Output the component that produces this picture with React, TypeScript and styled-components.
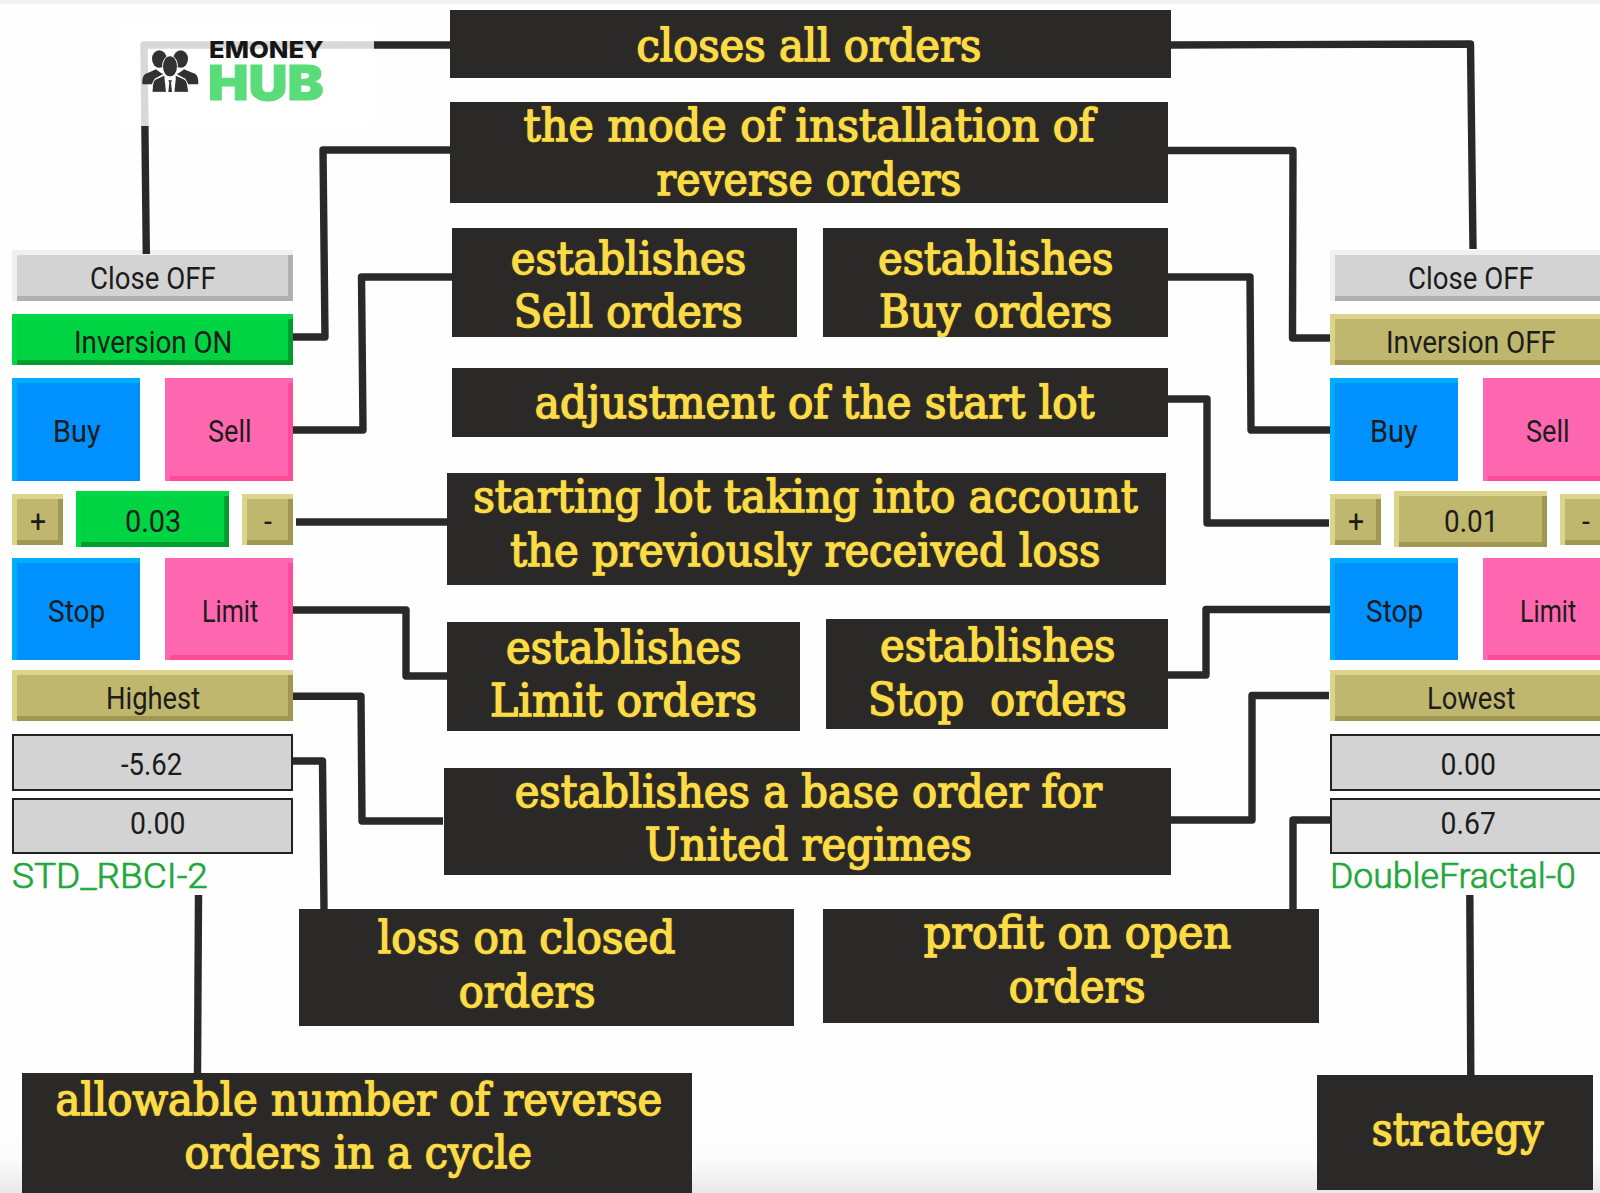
import { useLayoutEffect, useRef, useState } from "react";
import type { ReactNode } from "react";
import styled, { createGlobalStyle } from "styled-components";

const colors = {
  ink: "#2b2927",
  yellow: "#fbdc47",
  silver: "#d3d3d3",
  green: "#00d443",
  blue: "#0091ff",
  pink: "#ff68b0",
  khaki: "#c0b76e",
  label: "#1ea83c",
};

// [face, top/left edge, bottom/right edge]
const tones = {
  silver: [colors.silver, "#f0f0f0", "#b0b0b0"],
  green: [colors.green, "#00d846", "#009c2d"],
  blue: [colors.blue, "#00adff", "#0091ff"],
  pink: [colors.pink, "#ff68b0", "#ff4c98"],
  khaki: [colors.khaki, "#dcd48c", "#a09850"],
};

type Tone = keyof typeof tones;

const GlobalStyle = createGlobalStyle`
  body {
    margin: 0;
    background: #fefefe;
  }
  * {
    box-sizing: border-box;
  }
`;

const Board = styled.div`
  position: relative;
  width: 1600px;
  height: 1193px;
  overflow: hidden;
  border-top: 4px solid #f2f2f2;
  background: linear-gradient(#fefefe 1130px, #fafafa 1158px, #e8e8e8 1189px);
`;

const Panels = styled.div`
  display: flex;
  gap: 1036.5px;
  padding: 246.3px 0 0 12px;
`;

const Panel = styled.div`
  flex: none;
  width: 281.3px;
  font-family: Roboto, "Liberation Sans", sans-serif;
  font-size: 32px;
  color: #1c1c1c;
`;

const Row = styled.div<{ $h: number; $gap: number }>`
  display: flex;
  align-items: center;
  justify-content: space-between;
  height: ${(p) => p.$h}px;
  margin-bottom: ${(p) => p.$gap}px;
`;

const Key = styled.div<{ $tone: Tone; $w?: number; $h?: number }>`
  display: flex;
  align-items: center;
  justify-content: center;
  width: ${(p) => (p.$w ? `${p.$w}px` : "100%")};
  height: ${(p) => (p.$h ? `${p.$h}px` : "100%")};
  padding: 4px 0 0 1px;
  line-height: 32px;
  background: ${(p) => tones[p.$tone][0]};
  box-shadow: inset 5px 5px 0 ${(p) => tones[p.$tone][1]},
    inset -5px -5px 0 ${(p) => tones[p.$tone][2]};
`;

const Field = styled.div<{ $dx: number; $dy: number }>`
  display: flex;
  align-items: center;
  justify-content: center;
  width: 100%;
  height: 100%;
  border: 2.5px solid #222;
  background: ${colors.silver};
  line-height: 32px;
  > span {
    transform: translate(${(p) => p.$dx}px, ${(p) => p.$dy}px);
  }
`;

const Strategy = styled.div`
  padding-top: 2px;
  font-size: 35px;
  font-weight: 300;
  line-height: 42px;
  color: ${colors.label};
  -webkit-text-stroke: 0.7px ${colors.label};
`;

const FitBox = styled.span`
  display: block;
  flex: none;
  white-space: pre;
`;

const FitText = styled.span`
  display: inline-block;
  transform-origin: 0 50%;
`;

// Stretches or squeezes one line of text to a given width
const Fit = ({ w, children }: { w: number; children: ReactNode }) => {
  const ref = useRef<HTMLSpanElement>(null);
  const [scale, setScale] = useState(1);
  useLayoutEffect(() => {
    if (ref.current) setScale(w / ref.current.offsetWidth);
  }, [w]);
  return (
    <FitBox style={{ width: w }}>
      <FitText ref={ref} style={{ transform: `scaleX(${scale})` }}>
        {children}
      </FitText>
    </FitBox>
  );
};

const Wires = styled.svg`
  position: absolute;
  top: -4px;
  left: 0;
  fill: none;
  stroke: ${colors.ink};
  stroke-width: 7.4px;
  stroke-linejoin: round;
`;

const Callout = styled.div<{ $box: number[]; $top: number; $shift: number }>`
  position: absolute;
  left: ${(p) => p.$box[0]}px;
  top: ${(p) => p.$box[1] - 4}px;
  width: ${(p) => p.$box[2] - p.$box[0]}px;
  height: ${(p) => p.$box[3] - p.$box[1]}px;
  background: ${colors.ink};
  display: flex;
  flex-direction: column;
  align-items: center;
  font-family: "DejaVu Serif Condensed", "DejaVu Serif", serif;
  font-size: 45px;
  line-height: 53.5px;
  color: ${colors.yellow};
  -webkit-text-stroke: 1.3px ${colors.yellow};
  text-shadow: 0 0 2px #b89a1c;
  > span {
    height: 53.5px;
    transform: translate(${(p) => p.$shift}px, ${(p) => p.$top}px);
  }
`;

const Watermark = styled.div`
  position: absolute;
  left: 120px;
  top: 21px;
  width: 254px;
  height: 101px;
  padding: 15px 0 0 22px;
  display: flex;
  gap: 10px;
  background: rgba(255, 255, 255, 0.82);
  svg {
    flex: none;
    margin-top: 10px;
  }
`;

const Brand = styled.div`
  font-family: Inter, sans-serif;
  font-weight: 800;
`;

const BrandTop = styled.div`
  height: 20px;
  font-size: 23px;
  line-height: 20px;
  color: #171617;
`;

const BrandBottom = styled.div`
  height: 44px;
  margin-left: -1px;
  font-size: 48px;
  font-weight: 900;
  line-height: 45px;
  color: #5bdc7b;
  -webkit-text-stroke: 1px #5bdc7b;
`;

// box is [left, top, right, bottom], base the first baseline, mid the text centre
const callouts: {
  box: number[];
  base: number;
  mid: number;
  lines: [string, number][];
}[] = [
  { box: [449.5, 10, 1171, 78.4], base: 61.7, mid: 808.7, lines: [["closes all orders", 345]] },
  {
    box: [449.5, 102, 1168.4, 203.4],
    base: 141,
    mid: 809.5,
    lines: [["the mode of installation of", 571], ["reverse orders", 305]],
  },
  {
    box: [452, 227.5, 797.4, 337],
    base: 274,
    mid: 628.4,
    lines: [["establishes", 235], ["Sell orders", 229]],
  },
  {
    box: [823, 227.5, 1168.4, 337],
    base: 274,
    mid: 995.7,
    lines: [["establishes", 235], ["Buy orders", 233]],
  },
  { box: [452, 368, 1168.4, 437], base: 418, mid: 815, lines: [["adjustment of the start lot", 560]] },
  {
    box: [447, 473, 1166, 585.4],
    base: 512.5,
    mid: 804.7,
    lines: [["starting lot taking into account", 664], ["the previously received loss", 590]],
  },
  {
    box: [447, 621.7, 799.6, 731.3],
    base: 663.5,
    mid: 623.3,
    lines: [["establishes", 235], ["Limit orders", 267]],
  },
  {
    box: [825.6, 619, 1168.4, 729],
    base: 661,
    mid: 998,
    lines: [["establishes", 235], ["Stop  orders", 259]],
  },
  {
    box: [444.3, 767.7, 1171, 875],
    base: 807.3,
    mid: 808.3,
    lines: [["establishes a base order for", 587], ["United regimes", 327]],
  },
  {
    box: [298.5, 909, 794.4, 1026],
    base: 953.2,
    mid: 527.3,
    lines: [["loss on closed", 298], ["orders", 137]],
  },
  {
    box: [823, 909, 1319.4, 1023.4],
    base: 948.5,
    mid: 1077,
    lines: [["profit on open", 307], ["orders", 137]],
  },
  {
    box: [22, 1072.5, 692.4, 1197],
    base: 1114.7,
    mid: 358.7,
    lines: [["allowable number of reverse", 607], ["orders in a cycle", 348]],
  },
  { box: [1317, 1075, 1593, 1190.3], base: 1145, mid: 1457.8, lines: [["strategy", 172]] },
];

const wires = [
  "M450 45H144L146.3 254",
  "M1170 45L1470.5 44L1473 249",
  "M450 150H323L325 337H293",
  "M1168 150.5H1293L1292.5 338H1330",
  "M452 277H361.5L363 430H293",
  "M1168 277H1250L1251 430H1330",
  "M1168 399H1207V523H1329",
  "M296 522H447",
  "M293 610H406V676H447",
  "M1168 675H1206V609.5H1330",
  "M293 696.3H361L362 821H443",
  "M1170 820H1252V695.5H1329",
  "M293 761H322.5L324 910",
  "M1330 820H1293V910",
  "M198.5 895L197.5 1073",
  "M1469.8 895L1470.8 1076",
];

type PanelProps = {
  inversion: [string, number, Tone];
  lot: [string, number, Tone];
  base: [string, number];
  closed: [string, number, number];
  open: [string, number, number];
  strategy: [string, number];
};

const TradePanel = ({ inversion, lot, base, closed, open, strategy }: PanelProps) => (
  <Panel>
    <Row $h={51} $gap={13}>
      <Key $tone="silver">
        <Fit w={126}>Close OFF</Fit>
      </Key>
    </Row>
    <Row $h={51} $gap={13}>
      <Key $tone={inversion[2]}>
        <Fit w={inversion[1]}>{inversion[0]}</Fit>
      </Key>
    </Row>
    <Row $h={102.3} $gap={10.7}>
      <Key $tone="blue" $w={128}>
        <Fit w={48}>Buy</Fit>
      </Key>
      <Key $tone="pink" $w={128}>
        <Fit w={44}>Sell</Fit>
      </Key>
    </Row>
    <Row $h={56} $gap={10.4}>
      <Key $tone="khaki" $w={51} $h={51}>
        <Fit w={16}>+</Fit>
      </Key>
      <Key $tone={lot[2]} $w={153.5}>
        <Fit w={lot[1]}>{lot[0]}</Fit>
      </Key>
      <Key $tone="khaki" $w={51} $h={51}>
        <Fit w={8}>-</Fit>
      </Key>
    </Row>
    <Row $h={102.3} $gap={10.4}>
      <Key $tone="blue" $w={128}>
        <Fit w={57}>Stop</Fit>
      </Key>
      <Key $tone="pink" $w={128}>
        <Fit w={56}>Limit</Fit>
      </Key>
    </Row>
    <Row $h={51} $gap={13}>
      <Key $tone="khaki">
        <Fit w={base[1]}>{base[0]}</Fit>
      </Key>
    </Row>
    <Row $h={56.2} $gap={7.8}>
      <Field $dx={closed[2]} $dy={2}>
        <Fit w={closed[1]}>{closed[0]}</Fit>
      </Field>
    </Row>
    <Row $h={56} $gap={0}>
      <Field $dx={open[2]} $dy={-3.5}>
        <Fit w={open[1]}>{open[0]}</Fit>
      </Field>
    </Row>
    <Strategy>
      <Fit w={strategy[1]}>{strategy[0]}</Fit>
    </Strategy>
  </Panel>
);

const PeopleIcon = () => (
  <svg width="57" height="42" viewBox="36 60 171 126" fill="#343133">
    <ellipse cx="88" cy="87" rx="22" ry="26" />
    <ellipse cx="152" cy="87" rx="22" ry="26" />
    <path d="M37 163C36 140 41 132 55 128L78 118C86 124 92 130 100 132L74 146L66 163Z" />
    <path d="M205 163C206 140 201 132 187 128L162 118C154 124 148 130 140 132L166 146L174 163Z" />
    <g stroke="#fff" strokeWidth="3">
      <path d="M66 187C68 160 68 151 80 146L102 136L120 160L138 136L160 146C172 151 172 160 176 187Z" />
      <ellipse cx="120" cy="109" rx="22.5" ry="32" />
    </g>
    <path fill="#fff" d="M103 140L108 187H133L138 140L125 149H116Z" />
    <path d="M115 151H126L123 158L126 186H115L118 158Z" />
  </svg>
);

const App = () => (
  <>
    <GlobalStyle />
    <Board>
      <Panels>
        <TradePanel
          inversion={["Inversion ON", 158, "green"]}
          lot={["0.03", 56, "green"]}
          base={["Highest", 94]}
          closed={["-5.62", 61, -1]}
          open={["0.00", 55, 5]}
          strategy={["STD_RBCI-2", 196]}
        />
        <TradePanel
          inversion={["Inversion OFF", 170, "khaki"]}
          lot={["0.01", 54, "khaki"]}
          base={["Lowest", 88]}
          closed={["0.00", 55, -2.5]}
          open={["0.67", 55, -2.5]}
          strategy={["DoubleFractal-0", 246]}
        />
      </Panels>
      <Wires width="1600" height="1193">
        {wires.map((d) => (
          <path key={d} d={d} />
        ))}
      </Wires>
      {callouts.map(({ box, base, mid, lines }) => (
        <Callout
          key={box.join()}
          $box={box}
          $top={base - 42.5 - box[1]}
          $shift={mid - (box[0] + box[2]) / 2}
        >
          {lines.map(([text, w]) => (
            <Fit key={text} w={w}>
              {text}
            </Fit>
          ))}
        </Callout>
      ))}
      <Watermark>
        <PeopleIcon />
        <Brand>
          <BrandTop>
            <Fit w={114}>EMONEY</Fit>
          </BrandTop>
          <BrandBottom>
            <Fit w={116}>HUB</Fit>
          </BrandBottom>
        </Brand>
      </Watermark>
    </Board>
  </>
);

export default App;
